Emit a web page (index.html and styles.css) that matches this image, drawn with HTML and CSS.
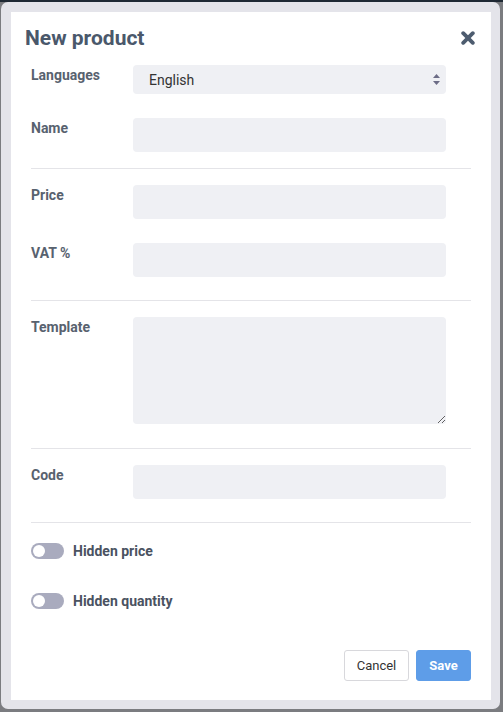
FILE: index.html
```html
<!DOCTYPE html>
<html lang="en">
<head>
<meta charset="utf-8">
<title>New product</title>
<link rel="stylesheet" href="styles.css">
</head>
<body>
<div class="frame">
  <div class="card">
    <div class="header">
      <h1 class="title">New product</h1>
      <button class="close" aria-label="Close">
        <svg width="14" height="14" viewBox="0 0 14 14"><path d="M2.2 2.2 L11.8 11.8 M11.8 2.2 L2.2 11.8" stroke="#4d5c6f" stroke-width="3.8" stroke-linecap="round"/></svg>
      </button>
    </div>
    <div class="body">
      <div class="section">
        <div class="row">
          <label class="label">Languages</label>
          <div class="select-wrap">
            <select class="control select"><option>English</option></select>
            <svg class="arrows" width="7" height="11" viewBox="0 0 7 11"><path d="M3.5 0 L7 4 L0 4 Z M0 7 L7 7 L3.5 11 Z" fill="#6c6c86"/></svg>
          </div>
        </div>
        <div class="row">
          <label class="label">Name</label>
          <input class="control" type="text">
        </div>
      </div>
      <hr class="divider divider-first">
      <div class="section">
        <div class="row">
          <label class="label">Price</label>
          <input class="control" type="text">
        </div>
        <div class="row">
          <label class="label">VAT %</label>
          <input class="control" type="text">
        </div>
      </div>
      <hr class="divider">
      <div class="section">
        <div class="row">
          <label class="label">Template</label>
          <textarea class="control textarea"></textarea>
        </div>
      </div>
      <hr class="divider divider-wide">
      <div class="section">
        <div class="row">
          <label class="label">Code</label>
          <input class="control" type="text">
        </div>
      </div>
      <hr class="divider">
      <div class="toggles">
        <div class="toggle-row"><span class="switch"><span class="knob"></span></span><span class="toggle-label">Hidden price</span></div>
        <div class="toggle-row"><span class="switch"><span class="knob"></span></span><span class="toggle-label">Hidden quantity</span></div>
      </div>
    </div>
    <div class="footer">
      <button class="btn btn-cancel">Cancel</button>
      <button class="btn btn-save">Save</button>
    </div>
  </div>
</div>
</body>
</html>
```

FILE: styles.css
```css
html, body {
  margin: 0;
  padding: 0;
}
body {
  width: 503px;
  height: 712px;
  background: linear-gradient(#1f2934 0, #1f2934 2px, #7b7c80 2px);
  font-family: Roboto, "Liberation Sans", sans-serif;
  overflow: hidden;
}
.frame {
  margin: 2px 3px 0 1px;
  height: 707px;
  box-sizing: border-box;
  background: #e4e4ea;
  border-radius: 7px;
  padding: 10px 9px 9px 10px;
}
.card {
  background: #fff;
  height: 688px;
  display: flex;
  flex-direction: column;
}
.header {
  display: flex;
  justify-content: space-between;
  align-items: flex-start;
  padding: 14px 16px 0 14px;
}
.title {
  margin: 0;
  font-size: 21px;
  line-height: 25px;
  font-weight: 700;
  color: #4a586b;
}
.close {
  border: none;
  background: none;
  padding: 0;
  margin-top: 5px;
  width: 14px;
  height: 14px;
  display: block;
  cursor: pointer;
}
.close svg { display: block; }
.body {
  padding: 14px 20px 0 20px;
  flex: 1;
}
.section {
  display: flex;
  flex-direction: column;
  gap: 24px;
}
.row {
  display: grid;
  grid-template-columns: 102px 313px;
  align-items: start;
}
.label {
  font-size: 14px;
  line-height: 20px;
  font-weight: 700;
  color: #58626f;
}
.control {
  box-sizing: border-box;
  width: 313px;
  height: 34px;
  border: none;
  border-radius: 4px;
  background: #eff0f4;
  font-family: Roboto, "Liberation Sans", sans-serif;
  font-size: 14px;
  color: #333;
  padding: 0 16px;
  margin: 0;
  outline: none;
}
.select-wrap {
  position: relative;
  width: 313px;
  height: 29px;
}
.select {
  height: 29px;
  appearance: none;
  -webkit-appearance: none;
  display: block;
}
.arrows {
  position: absolute;
  right: 6px;
  top: 9px;
}
.textarea {
  height: 107px;
  resize: vertical;
  padding: 8px 16px;
  display: block;
}
.divider {
  border: none;
  border-top: 1px solid #e4e4e8;
  margin: 23px 0 16px;
}
.divider-first {
  margin-top: 16px;
}
.divider-wide {
  margin-top: 24px;
}
.toggles {
  display: flex;
  flex-direction: column;
  gap: 30px;
  padding-top: 2px;
}
.toggle-row {
  display: flex;
  align-items: center;
  height: 20px;
  gap: 9px;
}
.switch {
  width: 33px;
  height: 16px;
  border-radius: 8px;
  background: #a9abbe;
  display: flex;
  align-items: center;
  padding-left: 2px;
  box-sizing: border-box;
}
.knob {
  width: 12px;
  height: 12px;
  border-radius: 50%;
  background: #fff;
}
.toggle-label {
  font-size: 14px;
  font-weight: 700;
  color: #4a5261;
}
.footer {
  display: flex;
  justify-content: flex-end;
  gap: 7px;
  padding: 0 20px 19px;
}
.btn {
  height: 31px;
  border-radius: 3px;
  font-family: Roboto, "Liberation Sans", sans-serif;
  font-size: 13px;
  padding: 0;
  cursor: pointer;
}
.btn-cancel {
  width: 65px;
  background: #fff;
  border: 1px solid #d8d8dc;
  color: #333;
}
.btn-save {
  width: 55px;
  background: #5e9de8;
  border: 1px solid #5e9de8;
  color: #fff;
  font-weight: 700;
}
```
